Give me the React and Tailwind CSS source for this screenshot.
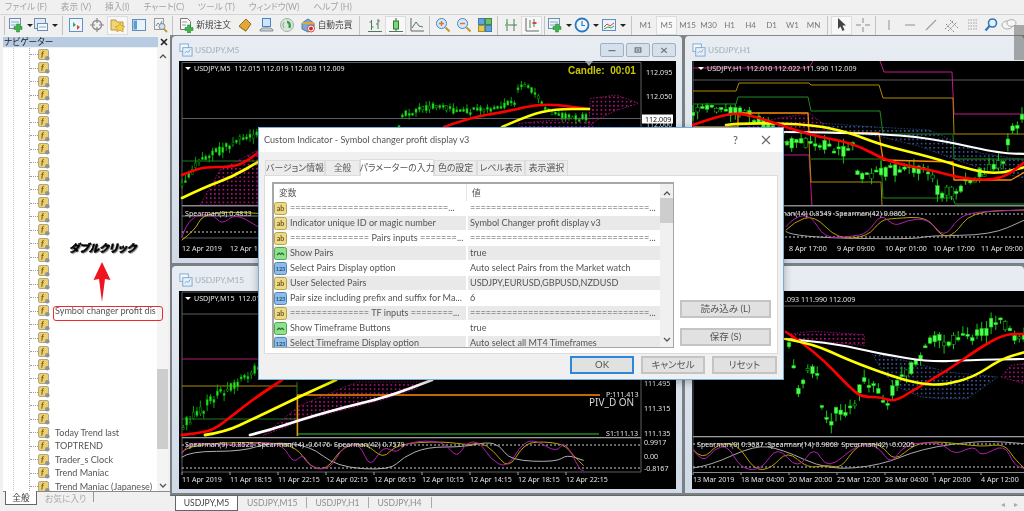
import React from "react";

// zoom-crop coordinates -> page coordinates
const z = (ox, oy, a) => a.map(([x, y]) => [ox + x / 3, oy + y / 3]);
const P = (a) => a.map((p) => p.join(",")).join(" ");

const lerp = (pts, x) => {
  for (let i = 1; i < pts.length; i++) {
    if (x <= pts[i][0]) {
      const [x0, y0] = pts[i - 1];
      const [x1, y1] = pts[i];
      return y0 + ((y1 - y0) * (x - x0)) / (x1 - x0 || 1);
    }
  }
  return pts[pts.length - 1][1];
};
const rnd = (n) => {
  const v = Math.sin(n * 12.9898) * 43758.5453;
  return v - Math.floor(v);
};

const Candles = ({ path, step = 3.4, w = 2, amp = 6, fill = "#2fe02f", wick = "#00a800", seed = 1 }) => {
  const out = [];
  let i = seed;
  for (let x = path[0][0]; x <= path[path.length - 1][0]; x += step) {
    i++;
    const y = lerp(path, x);
    const a = y + (rnd(i) - 0.5) * amp;
    const b = y + (rnd(i + 0.37) - 0.5) * amp;
    const top = Math.min(a, b);
    const bot = Math.max(a, b);
    const bull = rnd(i + 0.71) > 0.18;
    out.push(
      <g key={i}>
        <line x1={x} x2={x} y1={top - rnd(i + 0.2) * amp * 0.7} y2={bot + rnd(i + 0.5) * amp * 0.7} stroke={wick} strokeWidth="1" />
        <rect x={x - w / 2} y={top} width={w} height={Math.max(bot - top, 2)} fill={bull ? fill : "#000"} stroke={wick} strokeWidth="0.5" />
      </g>
    );
  }
  return <g>{out}</g>;
};

// rounded line through the midpoints, for the moving averages and the oscillators
const smooth = (p) => {
  let d = `M${p[0][0]} ${p[0][1]}`;
  for (let i = 1; i < p.length - 1; i++) {
    const mx = (p[i][0] + p[i + 1][0]) / 2;
    const my = (p[i][1] + p[i + 1][1]) / 2;
    d += `Q${p[i][0]} ${p[i][1]} ${mx} ${my}`;
  }
  const l = p[p.length - 1];
  return `${d}L${l[0]} ${l[1]}`;
};
const L = ({ p, c, w = 1 }) => (
  <polyline points={P(p)} fill="none" stroke={c} strokeWidth={w} strokeLinejoin="round" />
);
const C = ({ p, c, w = 1 }) => (
  <path d={smooth(p)} fill="none" stroke={c} strokeWidth={w} strokeLinecap="round" />
);
const T = ({ x, y, c = "#e4e4e4", children, s = 7.1 }) => (
  <text x={x} y={y} fill={c} fontSize={s} xmlSpace="preserve">
    {children}
  </text>
);
const Cloud = ({ p, kind = "pink" }) => (
  <polygon
    points={P(p)}
    fill={`url(#${kind}Dots)`}
    stroke={kind === "pink" ? "#c0188a" : "#3d5c9e"}
    strokeWidth="0.7"
    strokeDasharray="1.5 1.5"
  />
);
const Head = ({ x, y, children }) => (
  <g>
    <polygon points={`${x},${y - 3} ${x + 6},${y - 3} ${x + 3},${y}`} fill="#fff" />
    <T x={x + 9} y={y + 0.5}>{children}</T>
  </g>
);

const Chart = ({ x, y, w, h, children }) => (
  <svg
    className="block font-['Noto_Sans',sans-serif]"
    width={w}
    height={h}
    viewBox={`${x} ${y} ${w} ${h}`}
  >
    <defs>
      <pattern id="pinkDots" width="4.2" height="4.2" patternUnits="userSpaceOnUse">
        <rect width="1.5" height="1.5" fill="#c8148f" />
      </pattern>
      <pattern id="blueDots" width="4.2" height="4.2" patternUnits="userSpaceOnUse">
        <rect width="1.5" height="1.5" fill="#4060a8" />
      </pattern>
    </defs>
    <rect x={x} y={y} width={w} height={h} fill="#000" />
    {children}
  </svg>
);

const ChartM5 = () => (
  <Chart x={179} y={61} w={497} h={197}>
    <path d="M182 62.5H641V238H182Z M182 118.5H641" fill="none" stroke="#5a5f66" strokeWidth="1" />
    <line x1="182" x2="641" y1="161" y2="161" stroke="#1f7a1f" />
    <Cloud p={[[220, 170], [258, 150], [258, 205], [200, 205]]} />
    <Cloud p={z(172, 40, [[1040, 250], [1240, 232], [1265, 262], [1040, 262]])} />
    <Cloud p={z(172, 40, [[1255, 175], [1335, 165], [1400, 190], [1330, 212], [1275, 240], [1250, 262]])} />
    <Candles path={[[182, 187], [189, 173], [199, 163], [209, 153], [222, 150], [242, 137], [258, 135]]} amp={9} />
    <Candles
      path={[[399, 123], [405, 113], [439, 105], [459, 112], [489, 110], [515, 102], [520, 84], [535, 93], [545, 110], [572, 118], [587, 117]]}
      amp={7}
      seed={40}
    />
    <C c="#f00" w={2.6} p={[[182, 175], [192, 171], [205, 167], [229, 167], [242, 164], [258, 153]]} />
    <C c="#ff0" w={2.6} p={[[182, 198], [205, 187], [232, 177], [258, 162]]} />
    <C c="#f00" w={2.6} p={[[444, 127], [472, 117], [505, 112], [542, 103], [589, 109]]} />
    <C c="#ff0" w={2.6} p={[[502, 127], [529, 115], [555, 109], [589, 109]]} />
    <Head x={185} y={70}>USDJPY,M5  112.015 112.019 112.003 112.009</Head>
    <text x="568" y="74" fill="#c8c800" fontSize="10" fontWeight="700" className="font-['Liberation_Sans',sans-serif]" xmlSpace="preserve">
      Candle:  00:01
    </text>
    <polygon points="585,61 593,61 589,66" fill="#9aa0a6" />
    <T x={646} y={75}>112.095</T>
    <T x={646} y={99}>112.050</T>
    <T x={646} y={127}>112.000</T>
    <rect x="642" y="114.5" width="31" height="9" fill="#fff" />
    <T x={645} y={122} c="#111">112.009</T>
    <rect x="182" y="205" width="459" height="1.5" fill="#8a8a8a" />
    <line x1="182" x2="258" y1="232" y2="232" stroke="#ccc" strokeDasharray="2 2" />
    <line x1="182" x2="258" y1="216" y2="216" stroke="#888" />
    <C c="#b020b0" p={z(172, 40, [[30, 590], [50, 530], [120, 520], [150, 555], [190, 520], [258, 560]])} />
    <C c="#c8b400" p={z(172, 40, [[30, 600], [70, 570], [90, 525], [170, 515], [258, 520]])} />
    <T x={185} y={216}>Spearman(9) 0.4833</T>
    <T x={182} y={251}>12 Apr 2019</T>
    <T x={230} y={251}>12 Apr 18:15</T>
  </Chart>
);

const ChartH1 = () => (
  <Chart x={691} y={61} w={333} h={198}>
    <line x1="692" x2="1024" y1="80" y2="80" stroke="#5a5f66" />
    <line x1="692" x2="692" y1="61" y2="238" stroke="#5a5f66" />
    <L c="#c41a8c" p={[[692, 68], [808, 68], [812, 61]]} />
    <L c="#c41a8c" p={[[879, 61], [883, 72], [951, 72], [953, 114], [1024, 114]]} />
    <L c="#c41a8c" p={[[783, 155], [808, 155], [811, 206]]} />
    <L c="#b08a00" p={[[692, 91], [735, 91], [738, 83], [808, 83], [810, 85], [878, 85], [882, 98], [952, 98], [953, 134], [1024, 134]]} />
    <L c="#b08a00" p={[[783, 142], [808, 142], [810, 182], [880, 182], [881, 205]]} />
    <L c="#1f8a1f" p={[[692, 104], [735, 104], [737, 97], [807, 97], [810, 111], [879, 111], [882, 134], [952, 134], [953, 159], [1024, 159]]} />
    <L c="#1f8a1f" p={[[810, 159], [880, 159], [882, 198], [952, 198], [954, 204], [1024, 204]]} />
    <Cloud p={z(680, 30, [[200, 280], [385, 250], [425, 280], [430, 300], [200, 300]])} />
    <Cloud kind="blue" p={z(680, 30, [[425, 280], [600, 292], [745, 300], [900, 370], [1031, 390], [1031, 445], [900, 415], [800, 380], [720, 350], [600, 320], [430, 300]])} />
    <Candles
      path={[[692, 113], [713, 108], [747, 113], [790, 143], [820, 143], [840, 153], [853, 145], [857, 175], [880, 172], [913, 168], [930, 170], [937, 193], [957, 190], [980, 173], [1000, 163], [1013, 127], [1024, 117]]}
      step={4.7}
      w={3.6}
      amp={11}
      fill="#4dff4d"
      wick="#14c814"
      seed={80}
    />
    <L c="#ff8c00" w={1.3} p={[[737, 113], [807, 113], [808, 132], [878, 133], [882, 160], [952, 162], [953, 180], [1010, 180], [1024, 172]]} />
    <L c="#ff8c00" w={1.3} p={[[692, 127], [737, 127], [737, 113]]} />
    <C c="#fff" w={2.2} p={[[783, 132], [867, 133], [930, 138], [997, 153], [1024, 154]]} />
    <C c="#ff0" w={2.6} p={[[725, 125], [737, 123], [807, 124], [847, 132], [880, 145], [930, 157], [970, 170], [997, 174], [1024, 167]]} />
    <C c="#f00" w={2.6} p={[[692, 125], [717, 116], [743, 112], [807, 135], [853, 143], [887, 162], [930, 170], [963, 179], [1000, 180], [1024, 162]]} />
    <Head x={697} y={70}>USDJPY,H1  112.010 112.022 111.990 112.009</Head>
    <rect x="692" y="205" width="332" height="1.5" fill="#8a8a8a" />
    <line x1="692" x2="1024" y1="214" y2="214" stroke="#ccc" strokeDasharray="2 2" />
    <line x1="692" x2="1024" y1="237" y2="237" stroke="#ccc" strokeDasharray="2 2" />
    <C c="#a8a8a8" p={z(680, 30, [[315, 605], [340, 622], [700, 628], [740, 617], [930, 615], [1031, 570]])} />
    <C c="#b8a000" p={z(680, 30, [[315, 600], [340, 575], [400, 555], [470, 628], [560, 620], [600, 570], [640, 565], [740, 560], [780, 620], [820, 615], [870, 545], [1031, 540]])} />
    <C c="#b020b0" p={z(680, 30, [[315, 590], [340, 560], [390, 555], [430, 625], [510, 620], [560, 610], [600, 550], [640, 590], [680, 570], [740, 565], [790, 625], [830, 565], [880, 545], [1031, 540]])} />
    <T x={760} y={216}>Spearman(14) 0.8549  Spearman(42) 0.9865</T>
    {[["8 Apr 17:00", 788], ["9 Apr 09:00", 836], ["10 Apr 01:00", 884], ["10 Apr 17:00", 932], ["11 Apr 09:00", 980]].map(([t, x]) => (
      <T key={t} x={x} y={251}>{t}</T>
    ))}
  </Chart>
);

const ChartM15 = () => (
  <Chart x={179} y={289} w={497} h={198}>
    <path d="M182 290H641V470H182Z M182 312H641" fill="none" stroke="#5a5f66" />
    <line x1="182" x2="300" y1="357" y2="357" stroke="#b01a78" />
    <line x1="182" x2="297" y1="384" y2="384" stroke="#b08a00" />
    <line x1="182" x2="297" y1="417" y2="417" stroke="#1f7a1f" />
    <line x1="297" x2="297" y1="380" y2="434" stroke="#1f8a1f" />
    <line x1="297.5" x2="297.5" y1="393" y2="434" stroke="#ff8c00" strokeWidth="1.4" />
    <line x1="297" x2="600" y1="393" y2="393" stroke="#ff8c00" strokeWidth="1.3" />
    <line x1="298" x2="599" y1="432" y2="432" stroke="#1f8a1f" strokeWidth="1.3" />
    <Cloud p={z(170, 380, [[280, 160], [390, 70], [560, 0], [760, 0], [740, 20], [650, 50], [400, 115]])} />
    <Candles path={z(0, 230, [[550, 580], [640, 500], [770, 410], [800, 380]])} amp={10} seed={140} />
    <C c="#f00" w={2.8} p={[[182, 433], [200, 431], [215, 427], [233, 413], [255, 396], [282, 378]]} />
    <C c="#ff0" w={2.8} p={[[205, 433], [225, 430], [253, 417], [278, 405], [303, 393], [336, 378]]} />
    <C c="#fff" w={2.8} p={[[250, 433], [270, 428], [303, 417], [345, 405], [387, 395], [432, 378]]} />
    <Head x={185} y={298}>USDJPY,M15  112.015 112.019 112.003 112.009</Head>
    <T x={606} y={395}>P:111.413</T>
    <T x={589} y={404} s={10} c="#d8d8d8">PIV_D ON</T>
    <T x={606} y={434}>S1:111.13</T>
    <T x={644} y={384}>111.495</T>
    <T x={644} y={409}>111.315</T>
    <T x={644} y={434}>111.135</T>
    <rect x="182" y="435" width="459" height="1.3" fill="#9a9a9a" />
    <line x1="182" x2="641" y1="443" y2="443" stroke="#ccc" strokeDasharray="2 2" />
    <line x1="182" x2="641" y1="466" y2="466" stroke="#ccc" strokeDasharray="2 2" />
    <C c="#b0b0b0" p={z(170, 380, [[36, 225], [60, 208], [220, 208], [300, 180], [420, 190], [500, 255], [660, 265], [700, 225], [770, 195], [880, 195], [950, 180], [990, 190], [1020, 235], [1160, 240], [1190, 218], [1240, 235]])} />
    <C c="#b8a000" p={z(170, 380, [[36, 210], [60, 185], [300, 180], [380, 195], [420, 255], [470, 265], [520, 190], [590, 185], [640, 232], [680, 185], [820, 178], [900, 190], [930, 180], [970, 205], [1015, 262], [1060, 190], [1100, 178], [1180, 185], [1210, 220], [1240, 250]])} />
    <C c="#b020b0" p={z(170, 380, [[36, 215], [50, 185], [100, 185], [230, 190], [280, 180], [340, 190], [370, 245], [400, 215], [420, 255], [480, 265], [520, 190], [570, 185], [600, 260], [640, 190], [680, 215], [710, 180], [820, 175], [860, 230], [890, 180], [930, 180], [960, 230], [1010, 260], [1060, 180], [1100, 175], [1160, 212], [1185, 175], [1230, 265], [1240, 265]])} />
    <T x={185} y={445}>Spearman(9) -0.8525  Spearman(14) -0.6176  Spearman(42) 0.7579</T>
    <T x={644} y={443}>0.9917</T>
    <T x={644} y={457}>0.00</T>
    <T x={644} y={469}>-0.8167</T>
    {[["11 Apr 2019", 182], ["11 Apr 18:15", 230], ["11 Apr 22:15", 278], ["12 Apr 02:15", 326], ["12 Apr 06:15", 374], ["12 Apr 10:15", 422], ["12 Apr 14:15", 470], ["12 Apr 18:15", 518], ["12 Apr 22:15", 566]].map(([t, x]) => (
      <g key={t}>
        <line x1={x} x2={x} y1="470" y2="473" stroke="#aaa" />
        <T x={x} y={480}>{t}</T>
      </g>
    ))}
  </Chart>
);

const ChartH4 = () => (
  <Chart x={691} y={289} w={333} h={198}>
    <line x1="692" x2="1024" y1="304" y2="304" stroke="#5a5f66" />
    <line x1="692" x2="692" y1="289" y2="471" stroke="#5a5f66" />
    <Cloud p={z(680, 260, [[330, 215], [400, 208], [550, 218], [550, 250], [440, 240], [330, 232]])} />
    <Cloud kind="blue" p={z(680, 260, [[570, 270], [650, 290], [800, 330], [950, 345], [860, 410], [780, 410], [720, 405], [640, 370], [600, 320]])} />
    <Cloud p={z(680, 260, [[960, 345], [990, 310], [1031, 305], [1031, 365]])} />
    <Candles
      path={[[788, 345], [797, 390], [807, 367], [817, 373], [822, 407], [828, 423], [837, 407], [843, 413], [855, 400], [860, 380], [873, 383], [887, 403], [893, 383], [920, 357], [925, 338], [953, 338], [983, 332], [990, 320], [1007, 323], [1013, 337], [1024, 335]]}
      step={4.7}
      w={3.6}
      amp={12}
      fill="#4dff4d"
      wick="#14c814"
      seed={220}
    />
    <C c="#fff" w={2.2} p={[[784, 337], [827, 340], [880, 352], [930, 360], [967, 358], [1024, 357]]} />
    <C c="#f00" w={2.6} p={[[785, 330], [813, 348], [853, 390], [863, 395], [880, 395], [893, 400], [913, 388], [947, 368], [977, 347], [1003, 332], [1024, 332]]} />
    <C c="#ff0" w={2.6} p={[[785, 337], [813, 342], [847, 358], [893, 375], [920, 382], [943, 383], [973, 375], [1000, 357], [1024, 350]]} />
    <T x={784} y={300}>.093 111.990 112.009</T>
    <rect x="692" y="434" width="332" height="1.3" fill="#9a9a9a" />
    <line x1="692" x2="1024" y1="442" y2="442" stroke="#ccc" strokeDasharray="2 2" />
    <line x1="692" x2="1024" y1="465" y2="465" stroke="#ccc" strokeDasharray="2 2" />
    <line x1="692" x2="1024" y1="470.5" y2="470.5" stroke="#8a8a8a" />
    <C c="#a8a8a8" p={z(680, 260, [[38, 618], [90, 610], [220, 550], [300, 560], [440, 625], [600, 610], [720, 560], [900, 535], [1031, 545]])} />
    <C c="#b8a000" p={z(680, 260, [[38, 565], [65, 595], [110, 545], [170, 545], [220, 625], [270, 620], [320, 565], [380, 620], [440, 608], [480, 620], [530, 545], [600, 545], [640, 600], [700, 545], [780, 538], [900, 555], [970, 545], [1000, 590], [1031, 620]])} />
    <C c="#b020b0" p={z(680, 260, [[38, 565], [65, 605], [100, 560], [140, 550], [180, 620], [240, 625], [290, 550], [350, 625], [400, 550], [440, 625], [530, 545], [590, 550], [630, 610], [670, 545], [780, 540], [820, 580], [880, 550], [900, 585], [970, 545], [1000, 610], [1031, 620]])} />
    <T x={696} y={445}>Spearman(9) 0.9687  Spearman(14) 0.9868  Spearman(42) -0.0205</T>
    {[["13 Mar 2019", 692], ["18 Mar 04:00", 740], ["20 Mar 20:00", 788], ["25 Mar 12:00", 836], ["28 Mar 04:00", 884], ["1 Apr 20:00", 932], ["4 Apr 12:00", 980]].map(([t, x]) => (
      <g key={t}>
        <line x1={x} x2={x} y1="471" y2="473" stroke="#aaa" />
        <T x={x} y={480}>{t}</T>
      </g>
    ))}
  </Chart>
);

const WinIcon = () => (
  <svg width="14" height="14" viewBox="0 0 15 15" className="shrink-0">
    <rect x="1" y="1" width="9" height="8" fill="#f4f8fc" stroke="#7fa6cc" />
    <rect x="4" y="5" width="10" height="9" fill="#e6eff8" stroke="#7fa6cc" />
    <path d="M6 11l2-2 2 1 2-3" fill="none" stroke="#7fa6cc" />
  </svg>
);

const Window = ({ title, controls, children }) => (
  <div className="h-[227px] rounded-t-[4px] bg-gradient-to-b from-[#e8edf3] to-[#cfdae6] px-[7px] flex flex-col overflow-hidden">
    <div className="h-[25px] shrink-0 flex items-center gap-[2px] pt-[3px]">
      <WinIcon />
      <span className="text-[8.4px] text-[#a3aeba]">{title}</span>
      {controls && (
        <div className="ml-auto flex gap-[2px] -mr-[1px]">
          {["M7 11h10", "M8 7h8v6H8z M10 10h4", "M8 7l8 7M16 7l-8 7"].map((d) => (
            <span key={d} className="w-[24px] h-[14px] rounded-[2px] border border-[#9fb0c2] bg-[#d6e0eb] flex items-center justify-center">
              <svg width="24" height="14" viewBox="0 0 24 20">
                <path d={d} fill="none" stroke="#6d7884" strokeWidth="1.8" />
              </svg>
            </span>
          ))}
        </div>
      )}
    </div>
    {children}
  </div>
);

// toolbar drawings
const I = ({ children }) => (
  <svg width="16" height="16" viewBox="0 0 16 16" className="shrink-0">
    {children}
  </svg>
);
const Plus = ({ x = 10, y = 11 }) => (
  <path d={`M${x - 1.5} ${y - 4}h3v2.5h2.5v3h-2.5v2.5h-3v-2.5h-2.5v-3h2.5z`} fill="#39b54a" stroke="#1f7f2a" strokeWidth="0.5" />
);
const Caret = () => <span className="w-0 h-0 border-x-[3px] border-x-transparent border-t-[3px] border-t-[#222] ml-[3px]" />;

const iconNew = (
  <I>
    <rect x="1.5" y="1.5" width="11" height="10" fill="#eef4fb" stroke="#6b8eb3" />
    <path d="M3 5h8M3 8h5" stroke="#8aa8c6" />
    <Plus />
  </I>
);
const iconProfile = (
  <I>
    <rect x="1.5" y="1.5" width="11" height="10" fill="#dfeaf6" stroke="#6b8eb3" />
    <rect x="4.5" y="6.5" width="10" height="7" fill="#f4f8fc" stroke="#6b8eb3" />
    <path d="M6 10h7" stroke="#8aa8c6" />
  </I>
);
const iconMarket = (
  <I>
    <rect x="1.5" y="1.5" width="13" height="13" fill="#eef5fc" stroke="#5f93c4" />
    <path d="M5 5l3 3-3 2z" fill="#3aa655" />
    <path d="M9 8l3 2-3 3z" fill="#d8453a" />
  </I>
);
const iconData = (
  <I>
    <circle cx="8" cy="8" r="4.5" fill="none" stroke="#8a8a8a" strokeWidth="1.4" />
    <path d="M8 1v5M8 10v5M1 8h5M10 8h5" stroke="#8a8a8a" strokeWidth="1.2" />
  </I>
);
const iconNav = (
  <I>
    <path d="M1 3h5l1 2h6v8H1z" fill="#f0d478" stroke="#b8963a" />
    <path d="M10 6l1.5 3 3.5.4-2.5 2.3.7 3.3-3.2-1.7-3.2 1.7.7-3.3L5 9.4 8.5 9z" fill="#f7cf45" stroke="#b8963a" strokeWidth="0.6" />
  </I>
);
const iconTerminal = (
  <I>
    <rect x="1.5" y="2.5" width="13" height="11" fill="#eaf2fb" stroke="#5f8fc0" />
    <rect x="2.5" y="3.5" width="3.5" height="9" fill="#5f9bd6" />
  </I>
);
const iconTester = (
  <I>
    <rect x="2.5" y="1.5" width="9" height="11" fill="#f2f2f2" stroke="#9a9a9a" />
    <path d="M4 9l2-3 2 2 2-4" stroke="#6a8aaa" fill="none" />
    <circle cx="10" cy="9.5" r="3" fill="#cfe2f4" stroke="#888" />
    <path d="M12 12l3 3" stroke="#c8932e" strokeWidth="1.8" />
  </I>
);
const iconOrder = (
  <I>
    <path d="M2.5 1.5h7l3 3v8h-10z" fill="#fafafa" stroke="#777" />
    <path d="M4 5h5M4 8h4" stroke="#999" />
    <Plus x={11} y={12} />
  </I>
);
const iconGold = (
  <I>
    <path d="M2 9l7-7 5 5-5 7z" fill="#e0a83a" stroke="#9c6d14" />
    <path d="M2 9l7 5v1l-7-5z" fill="#b5801e" />
  </I>
);
const iconServer = (
  <I>
    <rect x="4.5" y="1.5" width="8" height="8" fill="#cfe4f7" stroke="#3f86c6" />
    <path d="M2 13c1-3 12-3 13 0v1H2z" fill="#c9ccd0" stroke="#8a8f96" />
  </I>
);
const iconSignal = (
  <I>
    <circle cx="8" cy="8" r="6.5" fill="#d9e8d4" stroke="#9fb2a8" />
    <path d="M8 3.5a5 5 0 0 1 3 8l-2-1.5a2.5 2.5 0 0 0-1-4z" fill="#3d9a5c" />
    <path d="M5 5a5 5 0 0 0 0 6" stroke="#8a9fb0" fill="none" />
  </I>
);
const iconAuto = (
  <I>
    <path d="M2 6l6-4 6 4v6l-6 3-6-3z" fill="#7aa8d2" stroke="#4d7ca8" />
    <path d="M2 6h12" stroke="#e0a83a" strokeWidth="2" />
    <circle cx="11" cy="11.5" r="3.5" fill="#fff" stroke="#c8281e" strokeWidth="0.8" />
    <circle cx="11" cy="11.5" r="2" fill="#d8281e" />
  </I>
);
const iconBars = (
  <I>
    <path d="M4.5 3v10M2.5 5h2M4.5 10h2M11 2v10M9 7h2M11 4h2M1 14.5h14" stroke="#4f7a5a" strokeWidth="1" fill="none" />
  </I>
);
const iconCandles = (
  <I>
    <path d="M8 1v14" stroke="#555" />
    <rect x="5.5" y="4" width="5" height="8" fill="#78d878" stroke="#2f7a2f" />
    <path d="M1 14.5h14" stroke="#4f7a5a" />
  </I>
);
const iconLine = (
  <I>
    <path d="M2 1v13h13" stroke="#666" fill="none" />
    <path d="M3 11l4-6 3 4 4 1" stroke="#4f7a5a" fill="none" />
  </I>
);
const iconZoomIn = (
  <I>
    <circle cx="6.5" cy="6.5" r="5" fill="#d5e8f8" stroke="#3f86c6" />
    <path d="M4 6.5h5M6.5 4v5" stroke="#d8752a" strokeWidth="1.4" />
    <path d="M10.5 10.5l4 4" stroke="#c8932e" strokeWidth="2" />
  </I>
);
const iconZoomOut = (
  <I>
    <circle cx="6.5" cy="6.5" r="5" fill="#d5e8f8" stroke="#3f86c6" />
    <path d="M4 6.5h5" stroke="#d8752a" strokeWidth="1.4" />
    <path d="M10.5 10.5l4 4" stroke="#c8932e" strokeWidth="2" />
  </I>
);
const iconTile = (
  <I>
    <rect x="1.5" y="1.5" width="6" height="6" fill="#5fa4dc" stroke="#3f78b0" />
    <rect x="8.5" y="1.5" width="6" height="6" fill="#6cbf6c" stroke="#3d8a3d" />
    <rect x="1.5" y="8.5" width="6" height="6" fill="#e6c94e" stroke="#a88f2a" />
    <rect x="8.5" y="8.5" width="6" height="6" fill="#5fa4dc" stroke="#3f78b0" />
  </I>
);
const iconGridA = (
  <I>
    <path d="M4 2v12M2 8h12M11 2v12" stroke="#4f7a5a" strokeWidth="1" />
    <rect x="3" y="5" width="2" height="4" fill="#6cbf6c" />
  </I>
);
const iconGridB = (
  <I>
    <path d="M2 1v13h13" stroke="#666" fill="none" />
    <path d="M6 3v8M10 2v8" stroke="#4f7a5a" />
    <path d="M8.5 5h4v2h-4z" fill="#d8453a" />
  </I>
);
const iconClock = (
  <I>
    <circle cx="8" cy="8" r="6.5" fill="#eef5fc" stroke="#2f77bd" strokeWidth="1.8" />
    <path d="M8 4v4.5h3" stroke="#2f77bd" strokeWidth="1.2" fill="none" />
  </I>
);
const iconTemplate = (
  <I>
    <rect x="1.5" y="2.5" width="13" height="11" fill="#eaf2fb" stroke="#5f8fc0" />
    <path d="M3 10l3-3 3 2 4-3" stroke="#d8453a" fill="none" />
    <path d="M3 12l4-2 3 1 3-2" stroke="#3aa655" fill="none" />
  </I>
);
const iconCursor = (
  <I>
    <path d="M4 1l8 7.5H8.5l2 4.5-2 1-2-4.5L4 12z" fill="#444" />
  </I>
);
const iconCross = (
  <I>
    <path d="M8 1v5M8 10v5M1 8h5M10 8h5" stroke="#8a8a8a" />
  </I>
);
const iconVLine = (
  <I>
    <path d="M8 3v10" stroke="#a0a0a0" strokeWidth="1.2" />
  </I>
);
const iconHLine = (
  <I>
    <path d="M3 8h10" stroke="#a0a0a0" strokeWidth="1.2" />
  </I>
);
const iconSlant = (
  <I>
    <path d="M3 13L13 3" stroke="#a0a0a0" strokeWidth="1.2" />
  </I>
);
const iconChannel = (
  <I>
    <path d="M1 12L10 3M4 14L13 5M2 7l8 8M6 3l8 8" stroke="#777" strokeWidth="0.9" strokeDasharray="1.5 1" />
  </I>
);
const iconFib = (
  <I>
    <path d="M3 3h10M3 6h10M3 9h10M3 12h10" stroke="#a0a0a0" strokeDasharray="1.5 1" />
  </I>
);
const iconSearch = (
  <I>
    <circle cx="9.5" cy="6" r="4" fill="#e6f0fa" stroke="#2f77bd" strokeWidth="1.6" />
    <path d="M6.5 9l-4 4.5" stroke="#2f77bd" strokeWidth="2.2" />
  </I>
);
const iconComment = (
  <I>
    <ellipse cx="6.5" cy="8" rx="5.5" ry="4" fill="#f6f6f6" stroke="#aaa" />
    <ellipse cx="10.5" cy="6" rx="4.5" ry="3.3" fill="#f6f6f6" stroke="#aaa" />
  </I>
);

const Btn = ({ children, on, className }) => (
  <div className={`h-[19px] flex items-center justify-center shrink-0 ${on ? "bg-[#f8f8f8] border border-[#dcdcdc]" : ""} ${className}`}>
    {children}
  </div>
);
const Sep = ({ className }) => (
  <div className={`h-[19px] shrink-0 flex justify-center ${className}`}>
    <div className="w-[1px] h-full bg-[#c4c4c4]" />
  </div>
);

const Toolbar = () => (
  <div className="h-[21px] shrink-0 border-t border-[#d4d4d4] bg-[#f0f0f0] flex items-center text-[8.7px] text-[#444]">
    <Sep className="w-[8px]" />
    <Btn className="w-[24px]">{iconNew}<Caret /></Btn>
    <Btn className="w-[27px]">{iconProfile}<Caret /></Btn>
    <Sep className="w-[6px]" />
    <Btn className="w-[21px]">{iconMarket}</Btn>
    <Btn className="w-[21px]">{iconData}</Btn>
    <Btn className="w-[21px]" on>{iconNav}</Btn>
    <Btn className="w-[21px]">{iconTerminal}</Btn>
    <Btn className="w-[21px]">{iconTester}</Btn>
    <Sep className="w-[5px]" />
    <Btn className="w-[59px] gap-[2px]">{iconOrder}<span>新規注文</span></Btn>
    <Btn className="w-[21px]">{iconGold}</Btn>
    <Btn className="w-[21px]">{iconServer}</Btn>
    <Btn className="w-[21px]">{iconSignal}</Btn>
    <Btn className="w-[58px] gap-[2px]">{iconAuto}<span>自動売買</span></Btn>
    <Sep className="w-[9px]" />
    <Btn className="w-[21px]">{iconBars}</Btn>
    <Btn className="w-[21px]" on>{iconCandles}</Btn>
    <Btn className="w-[21px]">{iconLine}</Btn>
    <Sep className="w-[5px]" />
    <Btn className="w-[21px]">{iconZoomIn}</Btn>
    <Btn className="w-[21px]">{iconZoomOut}</Btn>
    <Btn className="w-[21px]">{iconTile}</Btn>
    <Sep className="w-[5px]" />
    <Btn className="w-[21px]">{iconGridA}</Btn>
    <Btn className="w-[21px]" on>{iconGridB}</Btn>
    <Sep className="w-[4px]" />
    <Btn className="w-[27px]">{iconNew}<Caret /></Btn>
    <Btn className="w-[27px]">{iconClock}<Caret /></Btn>
    <Btn className="w-[27px]">{iconTemplate}<Caret /></Btn>
    <Sep className="w-[8px]" />
    {["M1", "M5", "M15", "M30", "H1", "H4", "D1", "W1", "MN"].map((t) => (
      <Btn key={t} className="w-[21px] text-[8px] text-[#777]" on={t === "M5"}>{t}</Btn>
    ))}
    <Sep className="w-[7px]" />
    <Btn className="w-[21px]" on>{iconCursor}</Btn>
    <Btn className="w-[21px]">{iconCross}</Btn>
    <Sep className="w-[5px]" />
    <Btn className="w-[21px]">{iconVLine}</Btn>
    <Btn className="w-[21px]">{iconHLine}</Btn>
    <Btn className="w-[21px]">{iconSlant}</Btn>
    <Btn className="w-[21px]">{iconChannel}</Btn>
    <Btn className="w-[21px]">{iconFib}</Btn>
    <Btn className="w-[15px]">{iconSearch}</Btn>
    <Btn className="w-[22px]">{iconComment}</Btn>
  </div>
);

const NavIcon = () => (
  <svg width="12" height="12" viewBox="0 0 12 12" className="shrink-0">
    <rect x="0.5" y="0.5" width="10" height="10" rx="1.5" fill="#eccf6e" stroke="#b0a68a" />
    <text x="3" y="8" fontSize="8" fontStyle="italic" fontWeight="700" fill="#6b5a1e">f</text>
    <circle cx="9.3" cy="9.3" r="2.3" fill="#8f9398" />
  </svg>
);

const navLabels = { 19: "Symbol changer profit dis", 28: "Today Trend last", 29: "TOPTREND", 30: "Trader_s Clock", 31: "Trend Maniac", 32: "Trend Maniac (Japanese)" };

const Navigator = () => (
  <aside className="w-[170px] shrink-0 bg-[#f0f0f0] flex flex-col">
    <div className="h-[12px] mt-[1px] flex items-center pl-[3px] shrink-0">
      <div className="w-[155px] h-[10px] bg-[#b7cce3] text-[8.7px] leading-[10px] text-[#222] pl-[1px]">ナビゲーター</div>
      <svg width="8" height="8" viewBox="0 0 8 8" className="ml-[2px]">
        <path d="M1 1l6 6M7 1l-6 6" stroke="#222" strokeWidth="1.6" />
      </svg>
    </div>
    <div className="relative h-[443px] ml-[3px] mr-[2px] bg-white overflow-hidden flex shrink-0">
      <div className="w-[143px] border-l border-dotted border-[#c8c8c8] ml-[10px] relative">
        <div className="absolute left-[15px] top-0 bottom-0 border-l border-dotted border-[#a8a8a8]" />
        {Array.from({ length: 33 }, (_, i) => (
          <div key={i} className="h-[13.5px] flex items-center">
            <div className="w-[8px] ml-[16px] h-[1px] border-t border-dotted border-[#999] shrink-0" />
            <NavIcon />
            <span className="ml-[5px] text-[9.1px] text-[#555] whitespace-nowrap overflow-hidden">{navLabels[i]}</span>
          </div>
        ))}
      </div>
      <div className="w-[11px] h-full flex flex-col items-center bg-[#f4f4f4] absolute right-0">
        <svg width="8" height="6" viewBox="0 0 8 6" className="mt-[5px]"><path d="M1 5l3-3 3 3" fill="none" stroke="#555" strokeWidth="1.3" /></svg>
        <div className="w-full h-[80px] bg-[#cdcdcd] mt-[310px]" />
        <svg width="8" height="6" viewBox="0 0 8 6" className="mt-auto mb-[2px]"><path d="M1 1l3 3 3-3" fill="none" stroke="#555" strokeWidth="1.3" /></svg>
      </div>
    </div>
    <div className="h-[14px] ml-[3px] border-t border-[#8a8a8a] flex items-start text-[8.7px] shrink-0">
      <div className="ml-[2px] w-[32px] h-[14px] -mt-[1px] bg-white border-x border-b border-[#666] text-[#333] text-center leading-[13px]">全般</div>
      <span className="ml-[8px] text-[#aaa]">お気に入り</span>
      <span className="ml-[7px] w-[1px] h-[10px] bg-[#999]" />
    </div>
  </aside>
);

const ParamIcon = ({ kind }) => {
  const st = {
    ab: ["#ecd98a", "#b9a24a", "ab", "#6a5a1e"],
    num: ["#8fbde8", "#4d86bd", "123", "#1f4f80"],
    ok: ["#8fe08f", "#4da84d", "", ""],
  }[kind];
  return (
    <svg width="13" height="13" viewBox="0 0 13 13" className="shrink-0">
      <rect x="0.5" y="0.5" width="12" height="12" rx="2" fill={st[0]} stroke={st[1]} />
      {kind === "ok" ? (
        <path d="M3 8l2-2 1.5 1.5L8 6l2 2" fill="none" stroke="#1f6f1f" strokeWidth="1.1" />
      ) : (
        <text x="6.5" y="9" fontSize={kind === "ab" ? 7 : 5.5} fontWeight="700" textAnchor="middle" fill={st[3]}>{st[2]}</text>
      )}
    </svg>
  );
};

const eqName = "==============================...";
const eqVal = "==================================...";
const params = [
  ["ab", eqName, eqVal],
  ["ab", "Indicator unique ID or magic number", "Symbol Changer profit display v3"],
  ["ab", "=============== Pairs inputs =======...", eqVal],
  ["ok", "Show Pairs", "true"],
  ["num", "Select Pairs Display option", "Auto select Pairs from the Market watch"],
  ["ab", "User Selected Pairs", "USDJPY,EURUSD,GBPUSD,NZDUSD"],
  ["num", "Pair size including prefix and suffix for Ma...", "6"],
  ["ab", "=============== TF inputs ========...", eqVal],
  ["ok", "Show Timeframe Buttons", "true"],
  ["num", "Select Timeframe Display option", "Auto select all MT4 Timeframes"],
];

const DlgBtn = ({ children, primary, className }) => (
  <div
    className={`h-[18px] flex items-center justify-center bg-[#e1e1e1] text-[#555] text-[9.5px] ${
      primary ? "border-2 border-[#2b88d8]" : "border-2 border-[#c4c4c4]"
    } ${className}`}
  >
    {children}
  </div>
);

const Dialog = () => (
  <div className="absolute left-[258px] top-[127px] w-[526px] h-[253px] border border-[#6fb0e0] bg-[#f0f0f0] flex flex-col shadow-[0_2px_8px_rgba(0,0,0,0.3)]">
    <div className="h-[24px] shrink-0 bg-white flex items-center pl-[5px] text-[9.1px] text-[#555]">
      <span>Custom Indicator - Symbol changer profit display v3</span>
      <span className="ml-auto mr-[22px] text-[11px] text-[#555]">?</span>
      <svg width="12" height="12" viewBox="0 0 12 12" className="mr-[11px]">
        <path d="M2 2l8 8M10 2l-8 8" stroke="#666" strokeWidth="1.1" />
      </svg>
    </div>
    <div className="h-[23px] shrink-0 flex items-end pl-[6px] text-[8.9px] text-[#555]">
      {[
        ["バージョン情報", "w-[60px]"],
        ["全般", "w-[35px]"],
        ["パラメーターの入力", "w-[74px]", true],
        ["色の設定", "w-[43px]"],
        ["レベル表示", "w-[48px]"],
        ["表示選択", "w-[43px]"],
      ].map(([t, w, on]) => (
        <div
          key={t}
          className={`${w} flex items-center justify-center border-t border-x whitespace-nowrap ${
            on ? "h-[17px] bg-white border-[#dcdcdc] relative top-[1px]" : "h-[15px] bg-[#ececec] border-[#dcdcdc]"
          }`}
        >
          {t}
        </div>
      ))}
    </div>
    <div className="h-[179px] mx-[5px] shrink-0 bg-white border border-[#dcdcdc] flex pl-[7px] pt-[6px]">
      <div className="w-[402px] h-[166px] border-2 border-[#a6a6a6] border-r border-b flex overflow-hidden shrink-0">
        <div className="flex-1 min-w-0 text-[9.1px] text-[#555]">
          <div className="h-[17px] flex items-center text-[8.7px]">
            <div className="w-[192px] pl-[5px]">変数</div>
            <div className="w-[1px] h-full bg-[#e4e4e4]" />
            <div className="pl-[5px]">値</div>
          </div>
          {params.map(([kind, name, val], i) => (
            <div key={i} className="h-[15px] flex">
              <div className={`w-[192px] h-[14px] flex items-center gap-[3px] whitespace-nowrap overflow-hidden ${i % 2 ? "bg-[#e9e9e9]" : ""}`}>
                <ParamIcon kind={kind} />
                <span>{name}</span>
              </div>
              <div className="w-[1px] bg-white" />
              <div className={`flex-1 h-[14px] flex items-center pl-[2px] ml-[1px] whitespace-nowrap overflow-hidden ${i % 2 ? "bg-[#e9e9e9]" : ""}`}>
                {val}
              </div>
            </div>
          ))}
        </div>
        <div className="w-[13px] shrink-0 bg-[#f0f0f0] flex flex-col items-center">
          <svg width="8" height="6" viewBox="0 0 8 6" className="mt-[6px]"><path d="M1 5l3-3 3 3" fill="none" stroke="#555" strokeWidth="1.3" /></svg>
          <div className="w-full h-[25px] bg-[#cdcdcd] mt-[2px]" />
          <svg width="8" height="6" viewBox="0 0 8 6" className="mt-auto mb-[4px]"><path d="M1 1l3 3 3-3" fill="none" stroke="#555" strokeWidth="1.3" /></svg>
        </div>
      </div>
      <div className="w-[91px] ml-[6px] flex flex-col justify-end gap-[10px] pb-[7px]">
        <DlgBtn>読み込み (L)</DlgBtn>
        <DlgBtn>保存 (S)</DlgBtn>
      </div>
    </div>
    <div className="flex justify-end gap-[7px] pr-[6px] mt-[2px]">
      <DlgBtn primary className="w-[64px]">OK</DlgBtn>
      <DlgBtn className="w-[64px]">キャンセル</DlgBtn>
      <DlgBtn className="w-[65px]">リセット</DlgBtn>
    </div>
  </div>
);

export default function App() {
  return (
    <div className="relative w-[1024px] h-[511px] overflow-hidden bg-[#f0f0f0] flex flex-col blur-[0.3px] [font-feature-settings:'palt'] font-['Lato','Noto_Sans_CJK_JP',sans-serif]">
      <div className="h-[14px] shrink-0 flex items-center gap-[14px] pl-[5px] text-[8.7px] text-[#a4a4a4]">
        <span>ファイル (F)</span>
        <span>表示 (V)</span>
        <span>挿入(I)</span>
        <span>チャート(C)</span>
        <span>ツール (T)</span>
        <span>ウィンドウ(W)</span>
        <span>ヘルプ (H)</span>
      </div>
      <Toolbar />
      <div className="flex flex-1 min-h-0 relative">
        <Navigator />
        <div className="flex-1 min-w-0 flex flex-col">
          <div className="h-[460px] shrink-0 bg-[#7c8085] pl-[2px] pt-[1px] border-t-2 border-[#84888c]">
            <div className="grid grid-cols-[510px_339px] grid-rows-[227px_227px] gap-[3px] -mt-[2px]">
              <Window title="USDJPY,M5" controls><ChartM5 /></Window>
              <Window title="USDJPY,H1"><div className="-mr-[7px]"><ChartH1 /></div></Window>
              <Window title="USDJPY,M15"><ChartM15 /></Window>
              <Window title="USDJPY,H4"><div className="-mr-[7px]"><ChartH4 /></div></Window>
            </div>
          </div>
          <div className="flex-1 border-t border-[#666] flex items-start pl-[5px] text-[8.6px] text-[#8f8f8f]">
            <div className="w-[63px] h-[15px] bg-white border-x border-b border-[#666] text-[#444] text-center leading-[14px]">USDJPY,M5</div>
            <span className="ml-[9px] mt-[1px]">USDJPY,M15</span>
            <span className="ml-[9px] w-[1px] h-[11px] mt-[1px] bg-[#aaa]" />
            <span className="ml-[8px] mt-[1px]">USDJPY,H1</span>
            <span className="ml-[9px] w-[1px] h-[11px] mt-[1px] bg-[#aaa]" />
            <span className="ml-[8px] mt-[1px]">USDJPY,H4</span>
            <span className="ml-[9px] w-[1px] h-[11px] mt-[1px] bg-[#aaa]" />
            <span className="ml-auto mr-[6px] mt-[2px] flex gap-[9px] text-[#aaa] text-[8px]">
              <span>◂</span>
              <span>▸</span>
            </span>
          </div>
        </div>
        {/* annotation over the navigator */}
        <div className="absolute left-[69px] top-[206px] text-[10.5px] font-black italic text-black whitespace-nowrap [-webkit-text-stroke:0.4px_black] [text-shadow:1px_1px_1px_rgba(0,0,0,0.6)]">
          ダブルクリック
        </div>
        <svg width="20" height="42" viewBox="0 0 20 42" className="absolute left-[92px] top-[226px]">
          <path d="M10 1L18.5 19L13 18L10 41L7 18L1.5 19Z" fill="#f0141e" />
        </svg>
        <div className="absolute left-[53px] top-[271px] w-[110px] h-[15px] border-[1.5px] border-[#ee2a2a] rounded-[3px]" />
      </div>
      <div className="absolute right-0 top-[25px] w-[10px] h-[35px] bg-[#5c5c5c]/50" />
      <Dialog />
    </div>
  );
}
